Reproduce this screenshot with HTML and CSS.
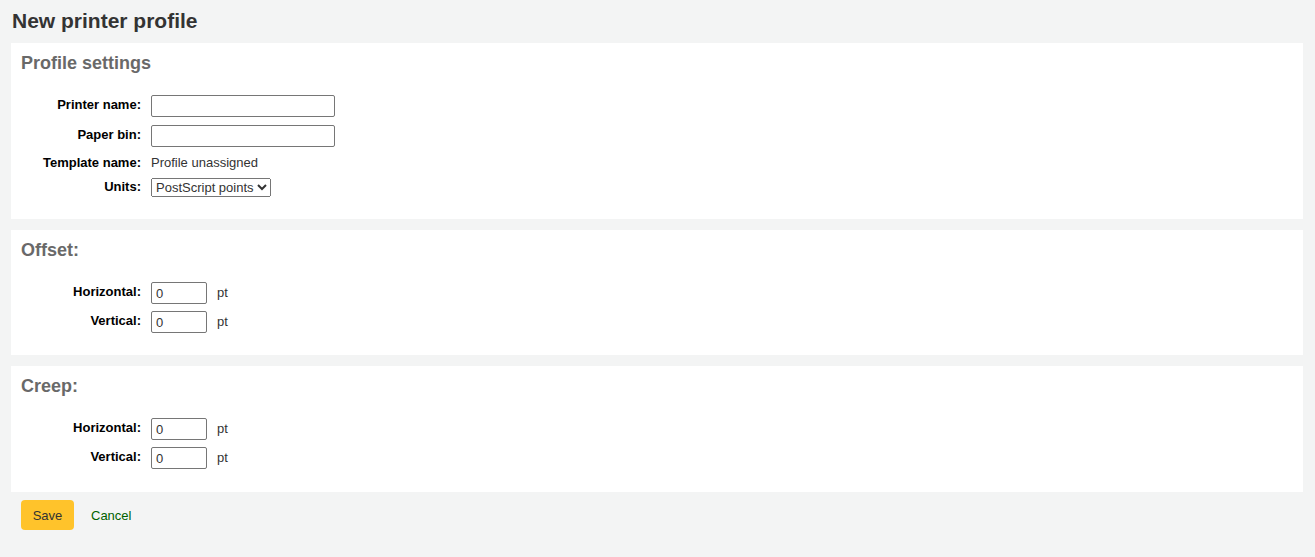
FILE: index.html
```html
<!DOCTYPE html>
<html>
<head>
<meta charset="utf-8">
<link rel="stylesheet" href="styles.css">
</head>
<body>
<main class="page">
  <h1 class="title">New printer profile</h1>
  <form class="form">
    <section class="panel">
      <h2 class="legend">Profile settings</h2>
      <div class="rows">
        <div class="row"><label class="lbl">Printer name:</label><input class="txt" type="text"></div>
        <div class="row"><label class="lbl">Paper bin:</label><input class="txt" type="text"></div>
        <div class="row"><span class="lbl lbl-text">Template name:</span><span class="value">Profile unassigned</span></div>
        <div class="row"><label class="lbl lbl-sel">Units:</label><select class="sel"><option>PostScript points</option></select></div>
      </div>
    </section>
    <section class="panel">
      <h2 class="legend">Offset:</h2>
      <div class="rows rows-num">
        <div class="row"><label class="lbl">Horizontal:</label><input class="num" type="text" value="0"><span class="unit">pt</span></div>
        <div class="row"><label class="lbl">Vertical:</label><input class="num" type="text" value="0"><span class="unit">pt</span></div>
      </div>
    </section>
    <section class="panel">
      <h2 class="legend">Creep:</h2>
      <div class="rows rows-num">
        <div class="row"><label class="lbl">Horizontal:</label><input class="num" type="text" value="0"><span class="unit">pt</span></div>
        <div class="row"><label class="lbl">Vertical:</label><input class="num" type="text" value="0"><span class="unit">pt</span></div>
      </div>
    </section>
    <div class="actions">
      <button class="btn-save" type="button">Save</button>
      <a class="cancel" href="#">Cancel</a>
    </div>
  </form>
</main>
</body>
</html>
```
FILE: styles.css
```css
html, body {
  margin: 0;
  padding: 0;
  background: #f3f4f4;
  font-family: "Liberation Sans", Arial, sans-serif;
  font-size: 13px;
  color: #333;
}
.page {
  padding: 0 12px 26px 11px;
}
.title {
  margin: 0;
  padding: 8px 0 0 1px;
  font-size: 21px;
  line-height: 25px;
  font-weight: bold;
  color: #333;
}
.form {
  margin-top: 10px;
}
.panel {
  background: #fff;
  padding: 10px 10px 22px 10px;
  margin-bottom: 11px;
}
.panel:last-of-type {
  padding-bottom: 23px;
  margin-bottom: 8px;
}
.legend {
  margin: 0;
  font-size: 18px;
  line-height: 21px;
  font-weight: bold;
  color: #696969;
}
.rows {
  margin-top: 21px;
  display: flex;
  flex-direction: column;
  gap: 8px;
}
.rows-num {
  gap: 7px;
}
.row {
  display: flex;
  align-items: flex-start;
}
.lbl {
  width: 120px;
  margin-right: 10px;
  text-align: right;
  font-weight: bold;
  color: #000;
  padding-top: 2px;
  line-height: 15px;
}
.lbl-text {
  padding-top: 0;
}
.lbl-sel {
  padding-top: 1px;
}
.value {
  line-height: 15px;
  color: #333;
}
.txt {
  box-sizing: border-box;
  width: 184px;
  height: 22px;
  margin: 0;
  border: 1px solid #767676;
  border-radius: 2px;
  padding: 1px 4px;
  font-family: "Liberation Sans", Arial, sans-serif;
  font-size: 13px;
}
.num {
  box-sizing: border-box;
  width: 56px;
  height: 22px;
  margin: 0;
  border: 1px solid #767676;
  border-radius: 2px;
  padding: 1px 4px;
  font-family: "Liberation Sans", Arial, sans-serif;
  font-size: 13px;
  color: #333;
}
.sel {
  height: 19px;
  margin: 0;
  font-family: "Liberation Sans", Arial, sans-serif;
  font-size: 13px;
  color: #333;
}
.unit {
  margin-left: 10px;
  line-height: 22px;
  color: #333;
}
.actions {
  display: flex;
  align-items: center;
  padding-left: 10px;
}
.btn-save {
  height: 30px;
  width: 53px;
  background: #ffc32b;
  border: none;
  border-radius: 4px;
  font-family: "Liberation Sans", Arial, sans-serif;
  font-size: 13px;
  color: #333;
  padding: 0;
}
.cancel {
  margin-left: 17px;
  color: #006100;
  text-decoration: none;
}
```
